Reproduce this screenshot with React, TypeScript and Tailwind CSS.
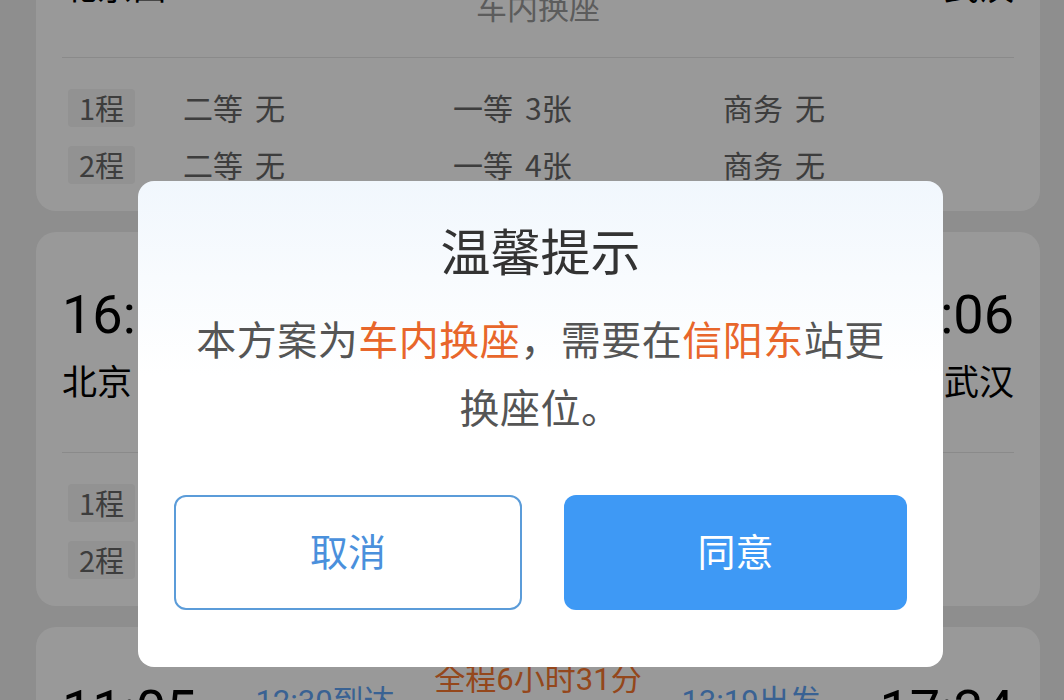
const cjk = "font-['Noto_Sans_CJK_SC','Noto_Sans',sans-serif]";
const num = "font-['Roboto','Noto_Sans_CJK_SC',sans-serif]";

interface Trip {
  depart: string;
  arrive: string;
  from: string;
  to: string;
  transferIn: string;
  transferOut: string;
  duration: string;
  seats: { second: string; first: string; business: string }[];
}

const trips: Trip[] = [
  {
    depart: '09:20',
    arrive: '15:36',
    from: '北京西',
    to: '武汉',
    transferIn: '12:05到达',
    transferOut: '12:51出发',
    duration: '全程6小时16分',
    seats: [
      { second: '无', first: '3张', business: '无' },
      { second: '无', first: '4张', business: '无' },
    ],
  },
  {
    depart: '16:10',
    arrive: '22:06',
    from: '北京',
    to: '武汉',
    transferIn: '19:40到达',
    transferOut: '20:21出发',
    duration: '全程5小时56分',
    seats: [
      { second: '无', first: '2张', business: '无' },
      { second: '无', first: '5张', business: '无' },
    ],
  },
  {
    depart: '11:05',
    arrive: '17:34',
    from: '北京西',
    to: '武汉',
    transferIn: '12:30到达',
    transferOut: '13:19出发',
    duration: '全程6小时31分',
    seats: [
      { second: '无', first: '1张', business: '无' },
      { second: '无', first: '6张', business: '无' },
    ],
  },
];

function Seat({ label, value }: { label: string; value: string }) {
  return (
    <div className="flex w-[270px] gap-[12px]">
      <span>{label}</span>
      <span>{value}</span>
    </div>
  );
}

function TripCard({ trip }: { trip: Trip }) {
  return (
    <div className="h-[374px] rounded-[20px] bg-white">
      <div className="flex h-[220px] px-[26px]">
        <div className="w-[150px] pt-[53px]">
          <div className={`${num} h-[60px] whitespace-nowrap text-[54px] leading-[60px] text-black`}>{trip.depart}</div>
          <div className={`${cjk} mt-[15px] text-[35px] leading-[40px] text-black`}>{trip.from}</div>
        </div>
        <div className="flex w-[226px] flex-col items-center pt-[56px]">
          <div className={`${num} whitespace-nowrap text-[31px] leading-[38px] text-[#5fa3f5]`}>{trip.transferIn}</div>
          <div className={`${cjk} mt-[36px] text-[25px] leading-[34px] text-[#666]`}>信阳东</div>
        </div>
        <div className="flex w-[200px] flex-col items-center pt-[34px]">
          <div className={`${num} whitespace-nowrap text-[31px] leading-[38px] text-[#f7772f]`}>{trip.duration}</div>
          <div className="mt-[26px] h-[2px] w-[150px] bg-[#ddd]" />
          <div className={`${cjk} mt-[50px] whitespace-nowrap text-[31px] leading-[38px] text-[#999]`}>车内换座</div>
        </div>
        <div className="flex w-[226px] flex-col items-center pt-[56px]">
          <div className={`${num} whitespace-nowrap text-[31px] leading-[38px] text-[#5fa3f5]`}>{trip.transferOut}</div>
          <div className={`${cjk} mt-[36px] text-[25px] leading-[34px] text-[#666]`}>信阳东</div>
        </div>
        <div className="flex-1 pt-[53px] text-right">
          <div className={`${num} h-[60px] whitespace-nowrap text-[54px] leading-[60px] text-black`}>{trip.arrive}</div>
          <div className={`${cjk} mt-[15px] text-[35px] leading-[40px] text-black`}>{trip.to}</div>
        </div>
      </div>
      <div className="mx-[26px] h-px bg-[#e6e6e6]" />
      <div className="px-[32px] pt-[21px]">
        {trip.seats.map((s, i) => (
          <div key={i} className={`${cjk} flex h-[57px] items-center text-[30px] text-[#666]`}>
            <div className="mr-[48px] flex h-[38px] w-[67px] items-center justify-center rounded-[4px] bg-[#f3f3f3] text-[29px]">
              {i + 1}程
            </div>
            <Seat label="二等" value={s.second} />
            <Seat label="一等" value={s.first} />
            <Seat label="商务" value={s.business} />
          </div>
        ))}
      </div>
    </div>
  );
}

export default function App() {
  return (
    <div className="relative h-[700px] w-[1064px] overflow-hidden bg-[#ededed]">
      <div className="-mt-[163px] flex flex-col gap-[21px] pl-[36px] pr-[24px]">
        {trips.map((t, i) => (
          <TripCard key={i} trip={t} />
        ))}
      </div>

      <div className="absolute inset-0 bg-black/40">
        <div className="ml-[138px] mt-[181px] h-[486px] w-[805px] rounded-[16px] bg-gradient-to-b from-[#f1f7fd] via-white via-40% to-white px-[36px] pt-[41px]">
          <h4 className={`${cjk} text-center text-[50px] leading-[55px] text-[#333]`}>温馨提示</h4>
          <p className={`${cjk} mt-[27px] text-center text-[40px] leading-[68px] tracking-[0.5px] text-[#555]`}>
            本方案为<span className="text-[#e8662b]">车内换座</span>，需要在<span className="text-[#e8662b]">信阳东</span>站更
            <br />
            换座位。
          </p>
          <div className="mt-[55px] flex gap-[42px]">
            <button className={`${cjk} flex h-[115px] w-[348px] items-center justify-center rounded-[12px] border-2 border-[#5b9cd9] bg-white pb-[7px] text-[38px] text-[#4a90dc]`}>
              取消
            </button>
            <button className={`${cjk} flex h-[115px] flex-1 items-center justify-center rounded-[12px] bg-[#3e99f5] pb-[7px] text-[38px] text-white`}>
              同意
            </button>
          </div>
        </div>
      </div>
    </div>
  );
}
